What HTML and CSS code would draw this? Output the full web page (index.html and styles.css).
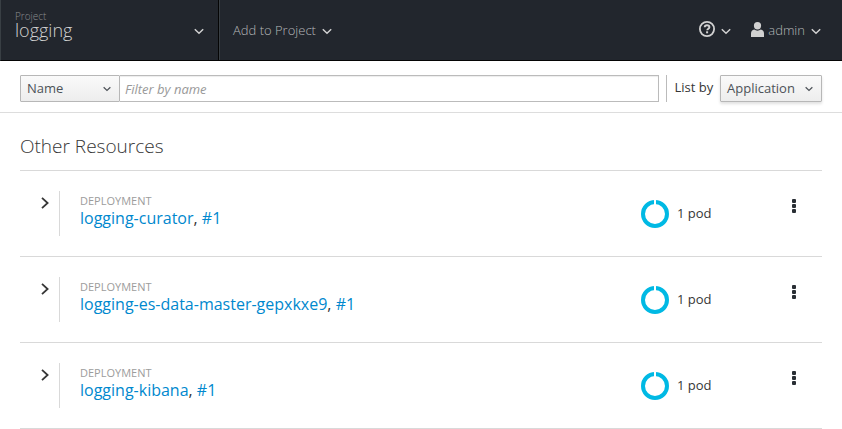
FILE: index.html
```html
<!DOCTYPE html>
<html lang="en">
<head>
<meta charset="utf-8">
<title>logging</title>
<link rel="stylesheet" href="styles.css">
</head>
<body>
<svg class="defs" width="0" height="0">
  <symbol id="down" viewBox="0 0 10 7"><path d="M.8 1.3 5 5.3 9.2 1.3" fill="none" stroke="currentColor" stroke-width="1.5"/></symbol>
  <symbol id="right" viewBox="0 0 8 12"><path d="M1 .8 6.6 6 1 11.2" fill="none" stroke="currentColor" stroke-width="1.8"/></symbol>
  <symbol id="ring" viewBox="0 0 28 28"><circle cx="14" cy="14" r="12" fill="none" stroke="#00b9e4" stroke-width="4"/><path d="M14 0V5" stroke="#fff" stroke-width="2"/></symbol>
  <symbol id="kebab" viewBox="0 0 4 14"><g fill="#292e34"><rect width="4" height="4" rx="1"/><rect y="5" width="4" height="4" rx="1"/><rect y="10" width="4" height="4" rx="1"/></g></symbol>
</svg>
<header class="nav">
  <div class="project">
    <div class="project-text"><span class="project-label">Project</span><span class="project-name">logging</span></div>
    <svg class="down"><use href="#down"/></svg>
  </div>
  <div class="add"><span>Add to Project</span><svg class="down"><use href="#down"/></svg></div>
  <div class="help">
    <svg class="help-icon" viewBox="0 0 16 16"><circle cx="8" cy="8" r="7.1" fill="none" stroke="currentColor" stroke-width="1.8"/><path d="M5.7 6.3C5.8 4.9 6.7 4.3 8 4.3c1.4 0 2.4.7 2.4 1.9 0 1.5-2.2 1.5-2.2 3.1" fill="none" stroke="currentColor" stroke-width="1.9"/><rect x="7.1" y="10.3" width="2" height="2" fill="currentColor"/></svg>
    <svg class="down"><use href="#down"/></svg>
  </div>
  <div class="user">
    <svg class="user-icon" viewBox="0 0 13 15"><ellipse cx="6.5" cy="3.7" rx="3.6" ry="3.7"/><path d="M0 15V11.5C0 9.2 1.3 8 3.2 7.6 5 9 8 9 9.8 7.6 11.7 8 13 9.2 13 11.5V15Z"/></svg>
    <span>admin</span><svg class="down"><use href="#down"/></svg>
  </div>
</header>
<div class="toolbar">
  <button class="select name"><span>Name</span><svg class="caret"><use href="#down"/></svg></button>
  <input class="filter" type="text" placeholder="Filter by name">
  <div class="list-by">List by</div>
  <button class="select app"><span>Application</span><svg class="caret"><use href="#down"/></svg></button>
</div>
<main>
  <h2>Other Resources</h2>
  <section class="row">
    <svg class="right"><use href="#right"/></svg>
    <div class="info"><div class="kind">DEPLOYMENT</div><div class="title"><a>logging-curator</a>, <a>#1</a></div></div>
    <div class="pods"><svg class="ring"><use href="#ring"/></svg><span>1 pod</span></div>
    <svg class="kebab"><use href="#kebab"/></svg>
  </section>
  <section class="row">
    <svg class="right"><use href="#right"/></svg>
    <div class="info"><div class="kind">DEPLOYMENT</div><div class="title"><a>logging-es-data-master-gepxkxe9</a>, <a>#1</a></div></div>
    <div class="pods"><svg class="ring"><use href="#ring"/></svg><span>1 pod</span></div>
    <svg class="kebab"><use href="#kebab"/></svg>
  </section>
  <section class="row">
    <svg class="right"><use href="#right"/></svg>
    <div class="info"><div class="kind">DEPLOYMENT</div><div class="title"><a>logging-kibana</a>, <a>#1</a></div></div>
    <div class="pods"><svg class="ring"><use href="#ring"/></svg><span>1 pod</span></div>
    <svg class="kebab"><use href="#kebab"/></svg>
  </section>
</main>
</body>
</html>
```
FILE: styles.css
```css
* { box-sizing: border-box; }
body { margin: 0; background: #fff; color: #363636; font: 13px/20px "Open Sans", sans-serif; overflow: hidden; }
svg { display: block; flex: none; }
.defs { position: absolute; }
.nav { display: flex; height: 61px; background: #22262d; border-bottom: 1px solid #050505; border-left: 1px solid #393f44; color: #b4b6b8; font-weight: 300; }
.down { width: 10px; height: 7px; color: #d1d1d1; margin-top: 28px; }
.project { display: flex; justify-content: space-between; width: 218px; padding: 0 14px; border-right: 1px solid #050505; }
.project-text { display: flex; flex-direction: column; padding-top: 10px; }
.project-label { font-size: 10px; line-height: 12px; color: #8b8d8f; }
.project-name { font-size: 18px; line-height: 16px; color: #d1d1d1; }
.add { display: flex; gap: 6px; padding-left: 13px; border-left: 1px solid #393f44; }
.add span, .user span { line-height: 60px; }
.help { display: flex; gap: 6px; margin-left: auto; color: #d1d1d1; }
.help-icon { width: 16px; height: 16px; margin-top: 21px; }
.user { display: flex; margin: 0 21px 0 20px; }
.user-icon { width: 13px; height: 15px; margin: 22px 4px 0 0; fill: #d1d1d1; }
.user .down { margin-left: 6px; }
.toolbar { display: flex; height: 52px; padding: 14px 20px 0; border-bottom: 1px solid #ddd; }
.select { display: flex; align-items: center; justify-content: space-between; height: 27px; padding: 0 8px 0 6px; border: 1px solid #b7b7b7; border-radius: 1px; background: linear-gradient(#fafafa, #ededed); color: #4d5258; font: 13px/25px "Open Sans", sans-serif; }
.name { width: 100px; }
.app { width: 102px; box-shadow: 0 2px 3px rgba(0, 0, 0, .12); }
.caret { width: 8px; height: 6px; margin-top: 1px; }
.filter { flex: 1; min-width: 0; height: 27px; padding: 0 5px; border: 1px solid #bbb; border-left: 0; box-shadow: inset 0 1px 1px rgba(0, 0, 0, .075); font: 13px "Open Sans", sans-serif; }
.filter::placeholder { color: #999; font-style: italic; opacity: 1; }
.list-by { width: 54px; height: 27px; margin-left: 7px; padding-left: 7.5px; border-left: 1px solid #bbb; line-height: 25px; white-space: nowrap; }
main { padding: 0 20px; }
h2 { height: 58px; margin: 0; padding-top: 21px; border-bottom: 1px solid #d9d9d9; font-size: 19px; line-height: 25px; font-weight: 300; }
.row { display: flex; height: 86px; padding-top: 20px; border-bottom: 1px solid #d9d9d9; }
.right { width: 8px; height: 12px; margin: 6px 10px 0 21px; color: #363636; }
.info { width: 582px; height: 45px; padding-left: 20px; border-left: 1px solid #d9d9d9; }
.kind { padding-top: 2px; font-size: 11px; line-height: 16px; color: #9c9c9c; }
.title { font-size: 16px; line-height: 18px; }
.title a { color: #0088ce; }
.pods { display: flex; width: 151px; gap: 8px; padding-top: 9px; }
.ring { width: 28px; height: 28px; }
.pods span { line-height: 27px; }
.kebab { width: 4px; height: 14px; margin-top: 8px; }
```
